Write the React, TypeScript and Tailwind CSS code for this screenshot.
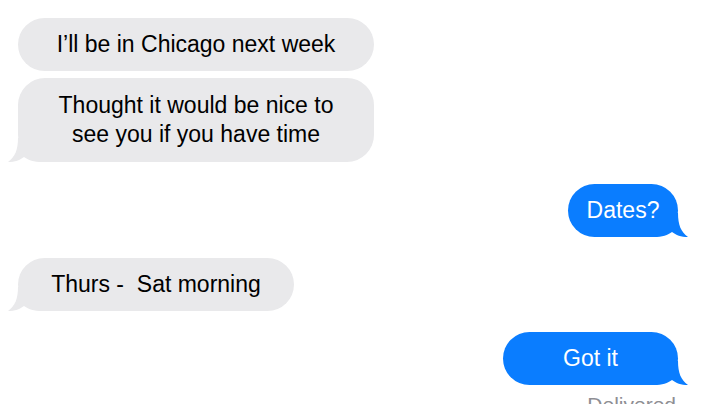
import React from 'react';

type Side = 'left' | 'right';

const Tail = ({ side, color }: { side: Side; color: string }) => (
  <svg
    width="40"
    height="24"
    viewBox="0 0 40 24"
    className={
      side === 'left'
        ? 'absolute -left-[10px] bottom-0'
        : 'absolute -right-[10px] bottom-0 -scale-x-100'
    }
  >
    <path d="M10 0 C10 12 7 19 0 24 C7 24 12 22 16 19 C20 22 26 24 34 24 L40 24 L40 0 Z" fill={color} />
  </svg>
);

interface BubbleProps {
  side: Side;
  width: string;
  pad?: string;
  tail?: boolean;
  children: React.ReactNode;
}

const Bubble = ({ side, width, pad = 'py-[12px]', tail = true, children }: BubbleProps) => {
  const blue = side === 'right';
  return (
    <div
      className={`relative ${width} ${pad} rounded-[27px] px-4 text-center text-[23px] leading-[29px] ${
        blue ? 'self-end bg-[#0a7dff] text-white' : 'self-start bg-[#e9e9eb] text-black'
      }`}
    >
      {tail && <Tail side={side} color={blue ? '#0a7dff' : '#e9e9eb'} />}
      <span className="relative">{children}</span>
    </div>
  );
};

export default function App() {
  return (
    <div
      className="w-[702px] h-[404px] overflow-hidden bg-white flex flex-col pt-[18px] pl-[18px] pr-[24px]"
      style={{ fontFamily: '"Liberation Sans", Arial, sans-serif' }}
    >
      <Bubble side="left" width="w-[356px]" tail={false}>
        I’ll be in Chicago next week
      </Bubble>
      <div className="h-[7px] shrink-0" />
      <Bubble side="left" width="w-[356px]" pad="py-[13px]">
        Thought it would be nice to
        <br />
        see you if you have time
      </Bubble>
      <div className="h-[22px] shrink-0" />
      <Bubble side="right" width="w-[110px]">
        Dates?
      </Bubble>
      <div className="h-[21px] shrink-0" />
      <Bubble side="left" width="w-[276px]">
        Thurs -&nbsp; Sat morning
      </Bubble>
      <div className="h-[21px] shrink-0" />
      <Bubble side="right" width="w-[175px]">
        Got it
      </Bubble>
      <div className="self-end shrink-0 mt-[8px] mr-[2px] text-[21px] leading-[24px] text-[#8e8e93]">Delivered</div>
    </div>
  );
}
